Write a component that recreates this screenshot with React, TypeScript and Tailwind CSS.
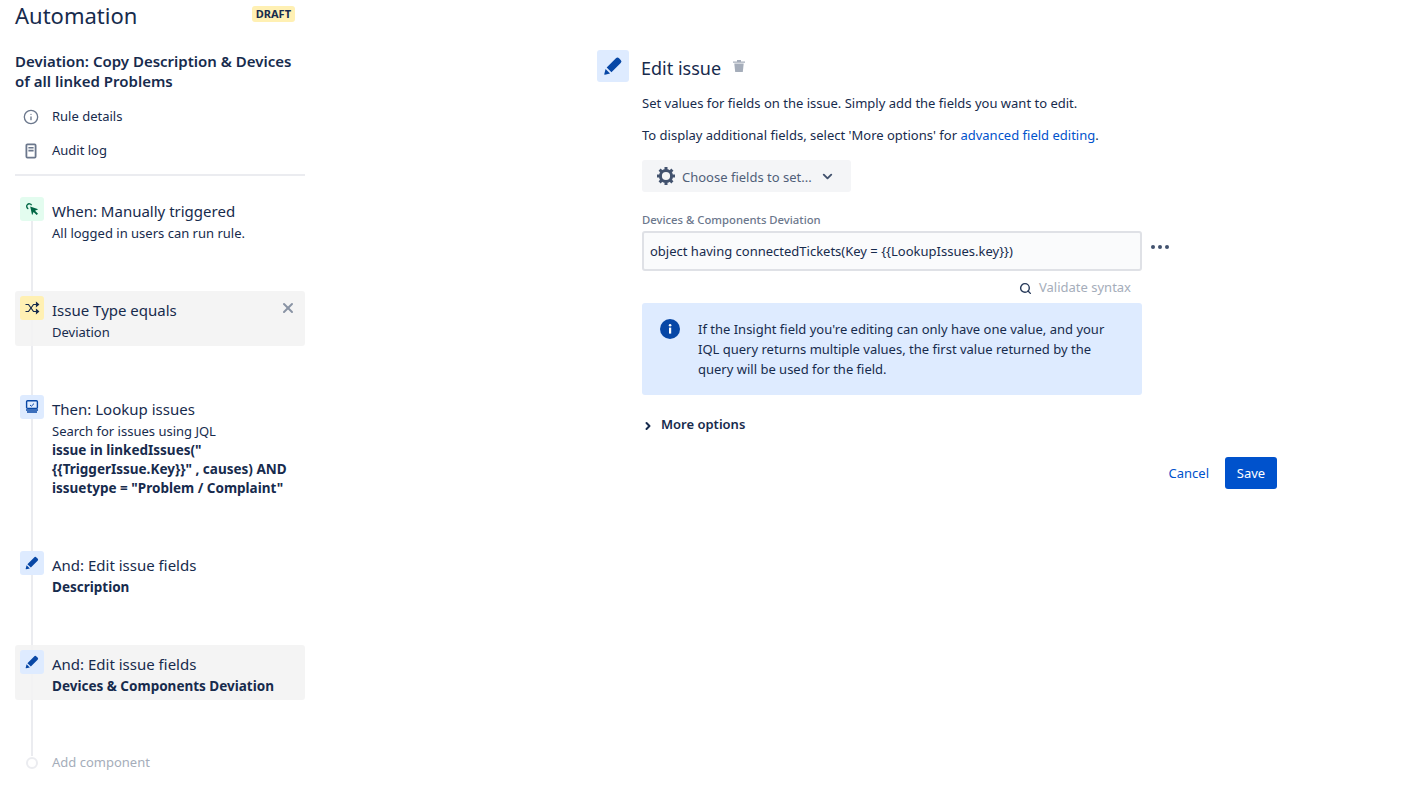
import React from 'react';
import { ChevronDown, ChevronRight, Info, Search, X } from 'lucide-react';

const Pencil: React.FC<{ size: number }> = ({ size }) => (
  <svg width={size} height={size} viewBox="0 0 24 24" fill="#0747a6">
    <path d="M15.2 3.6a2.4 2.4 0 0 1 3.4 0l1.8 1.8a2.4 2.4 0 0 1 0 3.4L10.3 18.9 5.1 13.7z" />
    <path d="M3.9 15.2l4.9 4.9-5.6 1.4a.6.6 0 0 1-.7-.7z" />
  </svg>
);

const CursorIcon = () => (
  <svg width="16" height="16" viewBox="0 0 16 16" fill="none">
    <path d="M6.2 5.6l8 2.7-3.2 1.4 3 3-1.4 1.4-3-3-1.5 3.2z" fill="#006644" />
    <path d="M4.3 7.8A2.6 2.6 0 1 1 7.6 4.2" stroke="#006644" strokeWidth="1.4" />
  </svg>
);

const ShuffleIcon = () => (
  <svg width="16" height="16" viewBox="0 0 16 16" fill="none" stroke="#172b4d" strokeWidth="1.2">
    <path d="M1.5 4.5h3l5 7h3" />
    <path d="M1.5 11.5h3l5-7h3" />
    <path d="M12.5 2.8l2 1.7-2 1.7zM12.5 9.8l2 1.7-2 1.7z" fill="#172b4d" />
  </svg>
);

const LookupIcon = () => (
  <svg width="16" height="16" viewBox="0 0 16 16" fill="none" stroke="#0747a6">
    <rect x="2.6" y="1.8" width="10.8" height="7.6" rx="1" strokeWidth="1.4" />
    <path d="M6 6l1.4 1.2L10 4.6" strokeWidth="1" />
    <path d="M2 11h12M3 13h10" strokeWidth="1.3" />
  </svg>
);

const PageIcon = () => (
  <svg width="16" height="16" viewBox="0 0 16 16">
    <rect x="3.4" y="1.4" width="9.2" height="13.2" rx="1" fill="none" stroke="#6b778c" strokeWidth="1.8" />
    <path d="M5.4 4h5.2v1.6H5.4zM5.4 6.8h5.2v1.6H5.4z" fill="#6b778c" />
  </svg>
);

const TrashIcon = () => (
  <svg width="14" height="14" viewBox="0 0 14 14" fill="#a5adba">
    <path d="M1 2.4h12v1.4H1zM5 1h4v1.4H5z" />
    <path d="M2.3 4.6h9.4l-.9 8.4H3.2z" />
  </svg>
);

const GearIcon = () => (
  <svg width="20" height="20" viewBox="0 0 20 20" fill="none" stroke="#42526e">
    <circle cx="10" cy="10" r="5.6" strokeWidth="3" />
    <path d="M10 1v3M10 16v3M1 10h3M16 10h3M3.6 3.6l2.1 2.1M14.3 14.3l2.1 2.1M3.6 16.4l2.1-2.1M14.3 5.7l2.1-2.1" strokeWidth="3" />
  </svg>
);

const SolidInfo = () => (
  <svg width="20" height="20" viewBox="0 0 20 20" className="shrink-0">
    <circle cx="10" cy="10" r="10" fill="#0747a6" />
    <rect x="9" y="8.6" width="2.2" height="6" fill="#fff" />
    <circle cx="10.1" cy="6.2" r="1.3" fill="#fff" />
  </svg>
);

type Step = {
  icon: React.ReactNode;
  tint: string;
  title: string;
  lines: { text: string; bold?: boolean }[];
  active?: boolean;
  removable?: boolean;
};

const steps: Step[] = [
  {
    icon: <CursorIcon />,
    tint: 'bg-[#e3fcef]',
    title: 'When: Manually triggered',
    lines: [{ text: 'All logged in users can run rule.' }],
  },
  {
    icon: <ShuffleIcon />,
    tint: 'bg-[#fff0b3]',
    title: 'Issue Type equals',
    lines: [{ text: 'Deviation' }],
    active: true,
    removable: true,
  },
  {
    icon: <LookupIcon />,
    tint: 'bg-[#deebff]',
    title: 'Then: Lookup issues',
    lines: [
      { text: 'Search for issues using JQL' },
      { text: 'issue in linkedIssues("', bold: true },
      { text: '{{TriggerIssue.Key}}" , causes) AND', bold: true },
      { text: 'issuetype = "Problem / Complaint"', bold: true },
    ],
  },
  {
    icon: <Pencil size={16} />,
    tint: 'bg-[#deebff]',
    title: 'And: Edit issue fields',
    lines: [{ text: 'Description', bold: true }],
  },
  {
    icon: <Pencil size={16} />,
    tint: 'bg-[#deebff]',
    title: 'And: Edit issue fields',
    lines: [{ text: 'Devices & Components Deviation', bold: true }],
    active: true,
  },
];

const StepCard: React.FC<{ step: Step }> = ({ step }) => (
  <div
    className={`relative mb-[44px] flex min-h-[55px] rounded-[3px] pb-[4px] pl-[5px] pr-[5px] pt-[5px] ${
      step.active ? 'bg-[#f3f3f3]/90' : ''
    }`}
  >
    <div className={`flex h-6 w-6 shrink-0 items-center justify-center rounded-[3px] ${step.tint}`}>{step.icon}</div>
    <div className="ml-2 pt-[2px]">
      <div className="mb-px text-[15px] leading-[24px]">{step.title}</div>
      {step.lines.map(line => (
        <div key={line.text} className={`leading-[19px] ${line.bold ? 'text-[13.5px] font-bold' : 'text-[13px]'}`}>
          {line.text}
        </div>
      ))}
    </div>
    {step.removable && <X size={16} strokeWidth={3} className="absolute right-[9px] top-[9px] text-[#8993a4]" />}
  </div>
);

const Sidebar = () => (
  <aside className="ml-[15px] w-[290px] shrink-0">
    <div className="flex h-[32px] items-start justify-between pr-[10px]">
      <h1 className="-mt-px text-[22px] leading-[32px]">Automation</h1>
      <span className="mt-[6px] rounded-[3px] bg-[#fff0b3] px-[4px] text-[11px] font-bold leading-[16px]">DRAFT</span>
    </div>
    <h2 className="mt-[19px] text-[15px] font-semibold leading-[20px]">
      Deviation: Copy Description &amp; Devices
      <br />
      of all linked Problems
    </h2>
    <div className="mt-[9px] flex h-[34px] items-center pl-[8px] text-[13px]">
      <Info size={16} className="mr-[13px] text-[#6b778c]" />
      Rule details
    </div>
    <div className="flex h-[34px] items-center pl-[8px] text-[13px]">
      <span className="mr-[13px] block h-4 w-4">
        <PageIcon />
      </span>
      Audit log
    </div>
    <div className="mt-[6px] h-[2px] bg-[#ebecf0]" />
    <div className="relative mt-[16px]">
      <div className="absolute left-[16px] top-[24px] h-[540px] w-[2px] bg-[#ebecf0]" />
      {steps.map((step, i) => (
        <StepCard key={i} step={step} />
      ))}
      <div className="relative mt-[53px] flex items-center pl-[11px] text-[13px] text-[#a5adba]">
        <span className="h-3 w-3 rounded-full border-2 border-[#ebecf0] bg-white" />
        <span className="ml-[14px]">Add component</span>
      </div>
    </div>
  </aside>
);

const EditPanel = () => (
  <main className="ml-[292px] w-[680px] pt-[50px]">
    <div className="flex items-start">
      <div className="flex h-8 w-8 items-center justify-center rounded-[3px] bg-[#deebff]">
        <Pencil size={22} />
      </div>
      <h2 className="ml-3 text-[18px] leading-[36px]">Edit issue</h2>
      <span className="ml-[11px] mt-[9px]">
        <TrashIcon />
      </span>
    </div>
    <div className="ml-[45px]">
      <p className="mt-[7px] text-[13px] leading-[20px]">
        Set values for fields on the issue. Simply add the fields you want to edit.
      </p>
      <p className="mt-[12px] text-[13px] leading-[20px]">
        To display additional fields, select 'More options' for{' '}
        <span className="text-[#0052cc]">advanced field editing</span>.
      </p>
      <button className="mt-[15px] flex h-8 w-[209px] items-center rounded-[3px] bg-[#f4f5f7] pl-[14px] text-[13px] text-[#505f79]">
        <GearIcon />
        <span className="ml-[6px] pt-[3px]">Choose fields to set...</span>
        <ChevronDown size={15} strokeWidth={3} className="ml-[8px] text-[#42526e]" />
      </button>
      <label className="mt-[20px] block text-[11.3px] font-medium leading-[16px] text-[#6b778c]">
        Devices &amp; Components Deviation
      </label>
      <div className="relative mt-[3px] w-[500px]">
        <div className="flex h-[40px] items-center rounded-[3px] border-2 border-[#dfe1e6] bg-[#fafbfc] px-[6px] pt-[2px] text-[13px]">
          {'object having connectedTickets(Key = {{LookupIssues.key}})'}
        </div>
        <div className="absolute -right-[27px] top-[14px] flex gap-[3px]">
          <span className="h-[4px] w-[4px] rounded-full bg-[#42526e]" />
          <span className="h-[4px] w-[4px] rounded-full bg-[#42526e]" />
          <span className="h-[4px] w-[4px] rounded-full bg-[#42526e]" />
        </div>
      </div>
      <div className="flex h-[32px] w-[489px] items-center justify-end pt-[2px] text-[13px] text-[#a5adba]">
        <Search size={13} strokeWidth={2.6} className="mr-[7px] text-[#253858]" />
        Validate syntax
      </div>
      <div className="flex h-[92px] w-[500px] rounded-[3px] bg-[#deebff] pl-[18px] pr-[24px] pt-[16px]">
        <SolidInfo />
        <p className="ml-[18px] text-[13px] leading-[20px]">
          If the Insight field you're editing can only have one value, and your IQL query returns multiple values, the
          first value returned by the query will be used for the field.
        </p>
      </div>
      <div className="mt-[20px] flex h-[20px] items-center text-[13px] font-semibold">
        <ChevronRight size={12} strokeWidth={4} className="mr-[7px] mt-[2px]" />
        More options
      </div>
      <div className="mt-[22px] flex items-center justify-end text-[13px]">
        <span className="mr-[16px] pt-[2px] text-[#0052cc]">Cancel</span>
        <button className="h-8 w-[52px] rounded-[3px] bg-[#0052cc] pt-px text-white">Save</button>
      </div>
    </div>
  </main>
);

export default function App() {
  return (
    <div className="flex h-[797px] overflow-hidden bg-white font-['Noto_Sans',sans-serif] text-[#172b4d]">
      <Sidebar />
      <EditPanel />
    </div>
  );
}
